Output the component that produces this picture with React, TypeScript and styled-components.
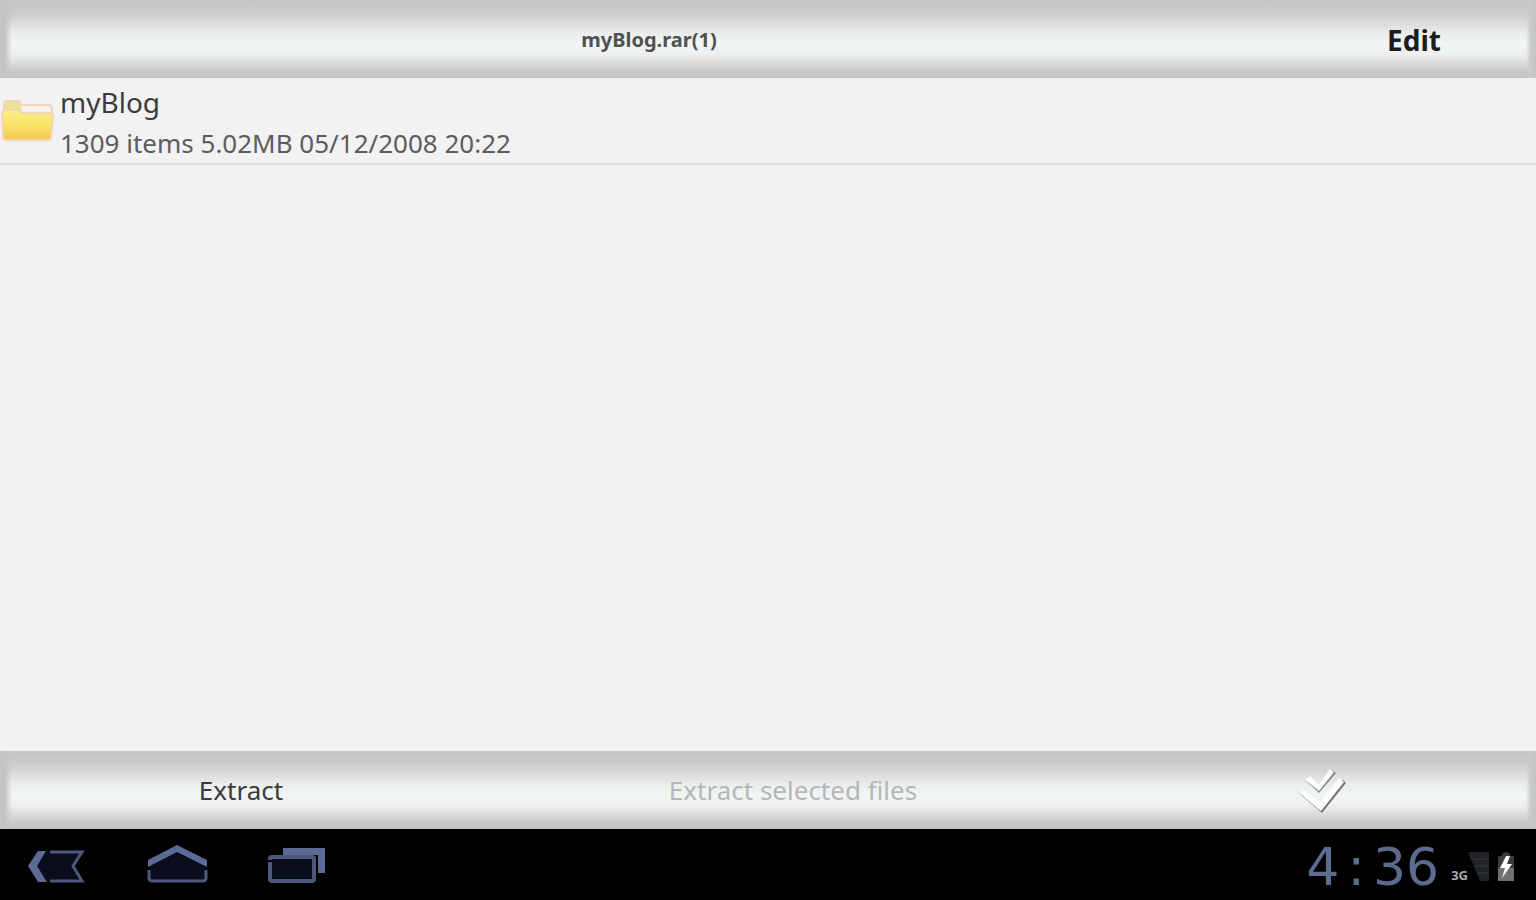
import React from "react";
import styled, { createGlobalStyle, css } from "styled-components";

const GlobalStyle = createGlobalStyle`
  * { box-sizing: border-box; }
  body {
    margin: 0;
    background: #f2f2f2;
    font-family: "Noto Sans", "Open Sans", sans-serif;
  }
`;

const Screen = styled.div`
  display: flex;
  flex-direction: column;
  min-height: 100vh;
`;

const metalBar = css`
  height: 78px;
  background:
    linear-gradient(90deg, #c2c5c4 0, #c2c5c4 5px, transparent 12px),
    linear-gradient(270deg, #c2c5c4 0, #c8caca 5px, transparent 10px),
    linear-gradient(180deg, #c4c6c6 0, #c9cbcb 12px, #dcdede 24px, #ebeeed 34px, #f1f5f4 44px, #eef0f0 54px, #dadddc 63px, #c9cbca 71px, #c3c5c4 78px);
`;

const Header = styled.header`
  ${metalBar}
  display: flex;
  align-items: center;
  padding: 2px 6px 0 0;
`;

const Title = styled.h1`
  flex: 1;
  margin: 0;
  font-size: 20px;
  line-height: 28px;
  font-weight: 700;
  text-align: center;
  color: #505252;
`;

const BarButton = styled.button<{ $width?: string; $strong?: boolean }>`
  display: flex;
  align-items: center;
  justify-content: center;
  width: ${(p) => p.$width ?? "auto"};
  height: 100%;
  padding: 0;
  border: 0;
  background: transparent;
  font-family: inherit;
  font-size: ${(p) => (p.$strong ? 28 : 26)}px;
  font-weight: ${(p) => (p.$strong ? 700 : 400)};
  line-height: 36px;
  color: ${(p) => (p.$strong ? "#1c1d1d" : "#3a3b3b")};
  &:disabled { color: #b5b8b7; }
`;

const FileList = styled.ul`
  flex: 1;
  margin: 0;
  padding: 0;
  list-style: none;
`;

const FileRow = styled.li`
  display: flex;
  align-items: center;
  gap: 6px;
  height: 87px;
  border-bottom: 2px solid #dfdfdf;
`;

const FileText = styled.div`
  display: flex;
  flex-direction: column;
  gap: 5px;
  padding-top: 4px;
`;

const FileName = styled.span`
  font-size: 28px;
  line-height: 36px;
  color: #3c3c3c;
`;

const FileInfo = styled.span`
  font-size: 26px;
  line-height: 36px;
  color: #5c5c5c;
`;

const Toolbar = styled.footer`
  ${metalBar}
  display: grid;
  grid-template-columns: 482fr 622fr 432fr;
  align-items: center;
`;

const SystemBar = styled.nav`
  display: flex;
  align-items: center;
  height: 71px;
  padding: 4px 20px 0 26px;
  background: #000;
`;

const NavButton = styled.button`
  width: 64px;
  height: 60px;
  margin-right: 56px;
  padding: 0;
  border: 0;
  background: transparent;
`;

const Status = styled.div`
  display: flex;
  align-items: center;
  margin-left: auto;
`;

const Clock = styled.time`
  display: flex;
  gap: 8px;
  margin-right: 12px;
  font-family: "DejaVu Sans", sans-serif;
  font-size: 52px;
  line-height: 56px;
  color: #5d6b91;
`;

const Network = styled.span`
  padding-top: 16px;
  font-size: 13px;
  line-height: 16px;
  font-weight: 700;
  color: #a9a9a9;
`;

const FolderIcon = () => (
  <svg width="54" height="50" viewBox="0 0 54 50" aria-hidden="true">
    <defs>
      <linearGradient id="folder" x1="0" y1="0" x2="0" y2="1">
        <stop offset="0" stopColor="#fbf088" />
        <stop offset=".5" stopColor="#f9e267" />
        <stop offset="1" stopColor="#f2c951" />
      </linearGradient>
    </defs>
    <path d="M4 14V8q0-3 3-3h11q3 0 3 4h28q3 0 3 4v10H4z" fill="#f6f1ee" stroke="#f0d4bf" strokeWidth="2" />
    <path d="M5 14V9q0-3 3-3h9q3 0 3 5l2 5H5z" fill="#ebe08b" />
    <path d="M2 17q0-3 3-3h13l4 3h28q3 0 3 3l-2 21q0 3-3 3H6q-3 0-3-3z" fill="url(#folder)" stroke="#f3d6b4" strokeWidth="2" />
  </svg>
);

const CheckIcon = () => (
  <svg width="54" height="50" viewBox="0 0 54 50" aria-hidden="true">
    <path d="m8 30 21 18 24-30-3-3-22 25-15-12z" fill="#747776" />
    <path d="m12 15 14 13L43 8l-4-3-13 18-9-8z" fill="#858887" />
    <path d="m6 28 4-3 17 12 19-24 5 4-23 29z" fill="#fbfcfc" />
    <path d="m12 15 5-4 9 9L37 4l4 3-15 19z" fill="#fbfcfc" />
    <path d="m6 28 20 17M12 15l13 10" stroke="#c6c9c8" strokeWidth="1" />
  </svg>
);

const BackIcon = () => (
  <svg width="64" height="60" viewBox="0 0 64 60" fill="none" aria-hidden="true">
    <path d="M20 15h36l-9 14 9 14H20L8 29z" fill="#090d1c" />
    <path d="M12 14h8L11 29l10 16h-9L2 29z" fill="#5c6a96" />
    <path d="M24 15h32l-9 14 9 15H24" stroke="#4c587e" strokeWidth="3" />
  </svg>
);

const HomeIcon = () => (
  <svg width="64" height="60" viewBox="0 0 64 60" fill="none" aria-hidden="true">
    <path d="M4 27 32 13l28 14v17H4z" fill="#090d1c" />
    <path d="M2 23 31 8l30 15v7L31 15 2 30z" fill="#5c6a96" />
    <path d="M3 33v8q0 3 4 3h49q4 0 4-3v-8" stroke="#4c587e" strokeWidth="3" />
  </svg>
);

const RecentIcon = () => (
  <svg width="64" height="60" viewBox="0 0 64 60" fill="none" aria-hidden="true">
    <path d="M17 11h42v25h-7v-18H17z" fill="#5c6a96" />
    <rect x="4" y="20" width="44" height="24" rx="2" fill="#090d1c" stroke="#4c587e" strokeWidth="4" />
    <path d="M1 24h6" stroke="#000" strokeWidth="2" />
  </svg>
);

const SignalIcon = () => (
  <svg width="22" height="32" viewBox="0 0 22 32" aria-hidden="true">
    <path d="M0 1h21v29h-9z" fill="#202228" />
    <path d="M3 8h18M6 15h15M9 22h12" stroke="#2a2d33" strokeWidth="2" />
  </svg>
);

const BatteryIcon = () => (
  <svg width="20" height="32" viewBox="0 0 20 32" aria-hidden="true">
    <path d="M6 3q4-4 8 0v2h4v25H2V5h4z" fill="#3c3c3c" />
    <path d="M2 17h16v13H2z" fill="#707070" />
    <path d="M10 5 4 17h5l-3 10 10-14h-5l3-8z" fill="#fff" />
  </svg>
);

const StatusIcons = styled.div`
  display: flex;
  align-items: center;
  gap: 6px;
`;

export default function App() {
  return (
    <Screen>
      <GlobalStyle />
      <Header>
        <Title>myBlog.rar(1)</Title>
        <BarButton $width="232px" $strong>Edit</BarButton>
      </Header>
      <FileList>
        <FileRow>
          <FolderIcon />
          <FileText>
            <FileName>myBlog</FileName>
            <FileInfo>1309 items 5.02MB 05/12/2008 20:22</FileInfo>
          </FileText>
        </FileRow>
      </FileList>
      <Toolbar>
        <BarButton>Extract</BarButton>
        <BarButton disabled>Extract selected files</BarButton>
        <BarButton aria-label="Select all"><CheckIcon /></BarButton>
      </Toolbar>
      <SystemBar>
        <NavButton aria-label="Back"><BackIcon /></NavButton>
        <NavButton aria-label="Home"><HomeIcon /></NavButton>
        <NavButton aria-label="Recent apps"><RecentIcon /></NavButton>
        <Status>
          <Clock>
            <span>4</span>
            <span>:</span>
            <span>36</span>
          </Clock>
          <Network>3G</Network>
          <StatusIcons>
            <SignalIcon />
            <BatteryIcon />
          </StatusIcons>
        </Status>
      </SystemBar>
    </Screen>
  );
}
